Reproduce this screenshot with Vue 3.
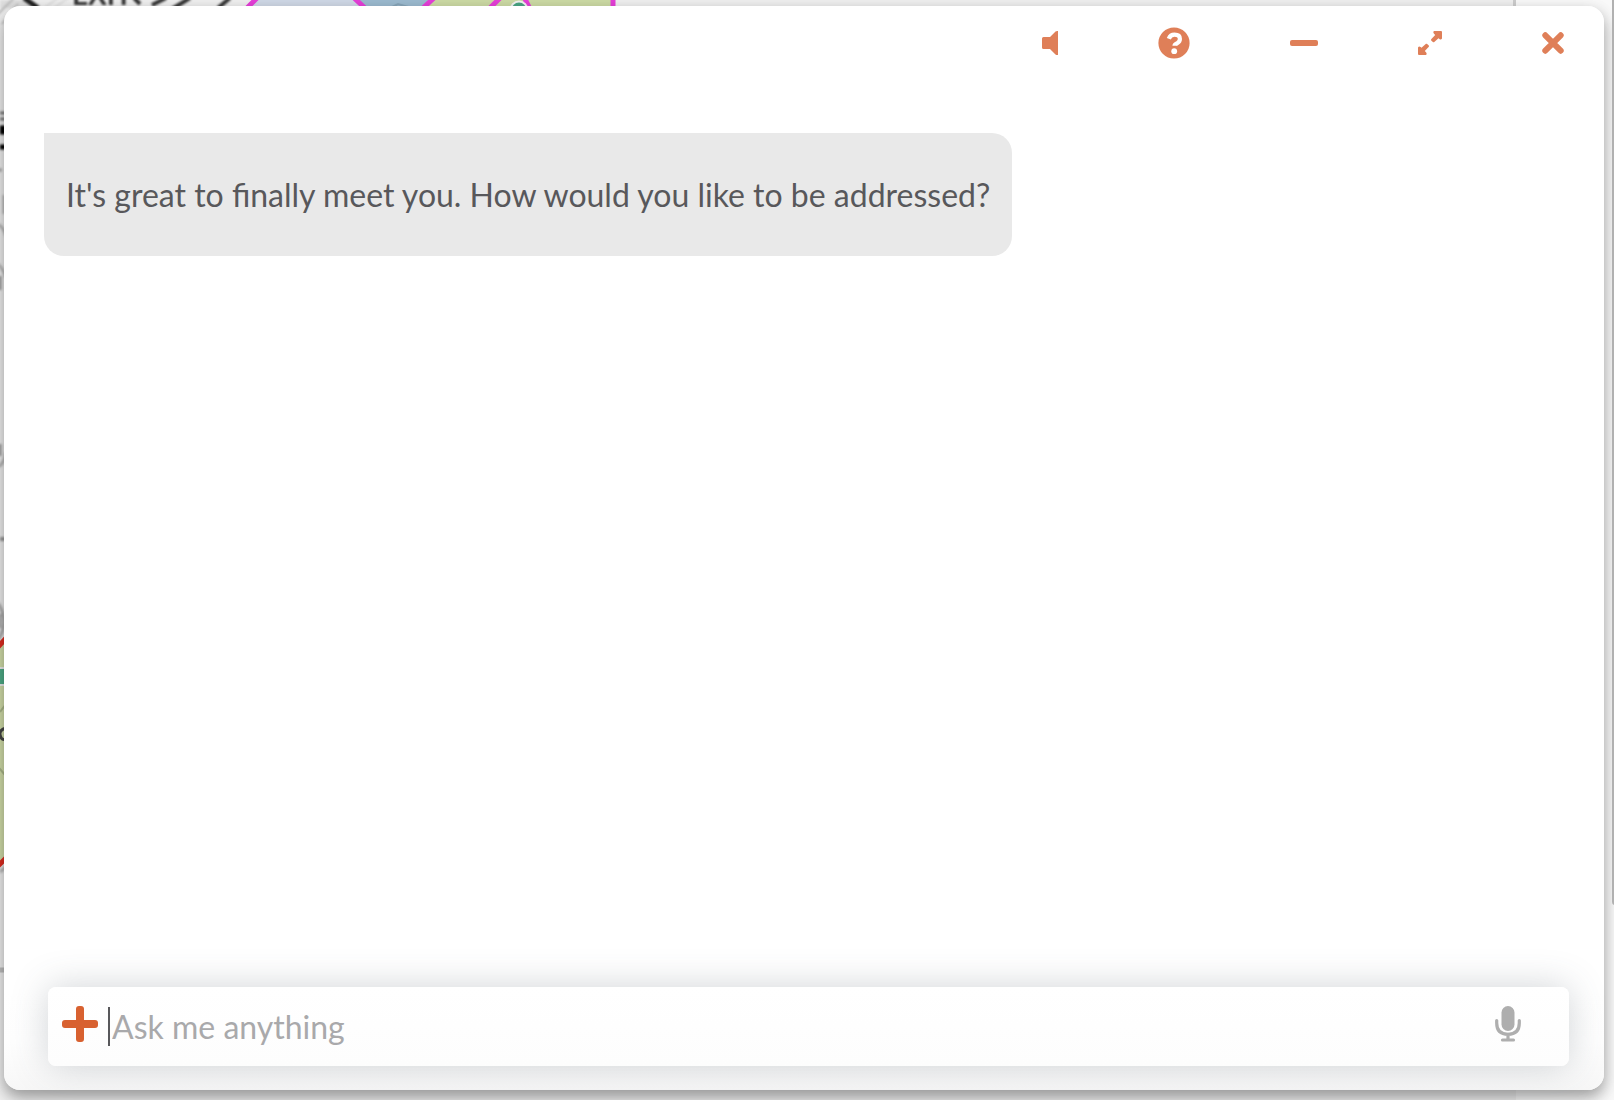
<script setup>
import { ref } from 'vue'

const messages = [
  { id: 1, text: "It's great to finally meet you. How would you like to be addressed?" },
]
const draft = ref('')
</script>

<template>
  <div class="page">
    <svg class="map" viewBox="0 0 1614 1100" preserveAspectRatio="xMinYMin slice" aria-hidden="true">
      <rect width="1614" height="1100" fill="#f0f0f0" />
      <rect x="1516" width="98" height="1100" fill="#f9f9f9" />
      <g class="soft">
        <path d="M0 0H24L44 8H0z" fill="#dcdcdc" />
        <path d="M-2 14L14 -2M2 24L18 4" stroke="#bbb" stroke-width="2" />
        <path d="M24 -2L38 8" stroke="#222" stroke-width="5" />
        <path d="M44 8L58 -2M54 8L68 -2" stroke="#ddd" stroke-width="2" />
        <path d="M134 -2L140 4M152 5L166 -2M172 9L190 -2M218 8L230 -2" stroke="#333" stroke-width="4" />
        <text x="72" y="5" class="label">EXIT</text>
      </g>
      <path d="M257 0H356L363 8H249z" fill="#d0d9e7" />
      <path d="M354 0H433L424 8H365z" fill="#9cbbd0" />
      <path d="M390 8L398 4L412 8" stroke="#88a6ba" stroke-width="2" fill="none" />
      <path d="M431 0H613V8H422z" fill="#cddba5" />
      <path d="M258 -3L246 9M352 -4L367 10M435 -3L422 9M502 -4L488 10M524 -3L530 9M613 0V8" stroke="#e63fd9" stroke-width="5" fill="none" />
      <circle cx="519" cy="10" r="8.500" fill="#4aa683" stroke="#f3f3f3" stroke-width="2" />
      <rect x="1513" width="3" height="8" fill="#cdcdcd" />

      <g class="soft" fill="none">
        <path d="M0 113H6M0 119H6" stroke="#777" stroke-width="3" />
        <path d="M0 130H6" stroke="#000" stroke-width="9" />
        <path d="M0 147H6" stroke="#000" stroke-width="5" />
        <circle cx="0" cy="170" r="2" fill="#aaa" />
        <path d="M4 195V214M-2 224Q4 228 6 236M-2 264Q4 270 6 278" stroke="#b8b8b8" stroke-width="3" />
        <path d="M0 276V290M0 444V456" stroke="#999" stroke-width="3" />
        <path d="M6 452Q5 463 -2 467" stroke="#b5b5b5" stroke-width="3" />
        <path d="M0 539H6" stroke="#999" stroke-width="4" />
        <path d="M-2 603Q10 622 -2 640M0 614V628" stroke="#a8a8a8" stroke-width="3" />
      </g>
      <path d="M0 645L8 636V856L0 866z" fill="#d2deaa" />
      <path d="M-2 647L8 636M-2 866L8 856" stroke="#e02c20" stroke-width="5" />
      <rect x="-8" y="668" width="16" height="17" fill="#4fae88" stroke="#eee" stroke-width="2" />
      <path d="M6 728Q-1 730 0 735Q2 742 6 738" stroke="#444" stroke-width="3" fill="none" />
      <path d="M0 712L6 704M-1 768L6 776" stroke="#acb98a" stroke-width="2" />
      <path d="M0 872L6 867" stroke="#b7b7b7" stroke-width="3" class="soft" />
      <path d="M0 970H6" stroke="#bebebe" stroke-width="5" />
    </svg>
    <div class="scroll-thumb"></div>

    <main class="chat">
      <header class="toolbar">
        <button type="button" aria-label="Mute">
          <svg width="16" height="24" viewBox="0 0 16 24"><path d="M1.500 6H8L13.500 .6Q14.300 0 15.200 0H16V24H15.200Q14.300 24 13.500 23.400L8 18H1.500Q0 18 0 16.500V7.500Q0 6 1.500 6z" /></svg>
        </button>
        <button type="button" aria-label="Help">
          <svg width="32" height="32" viewBox="0 0 32 32">
            <circle cx="16" cy="16" r="15.600" />
            <path d="M10.800 11.800Q12.300 7.700 16.500 7.700Q21.900 7.700 21.900 12Q21.900 14.600 19.200 16.200Q16.500 17.300 16.500 18.800" fill="none" stroke="#fff" stroke-width="4.200" />
            <circle cx="16.200" cy="24.200" r="2.900" fill="#fff" />
          </svg>
        </button>
        <button type="button" aria-label="Minimize">
          <svg width="28" height="6" viewBox="0 0 28 6"><rect width="28" height="6" rx="2" /></svg>
        </button>
        <button type="button" aria-label="Expand">
          <svg width="24" height="24" viewBox="0 0 24 24">
            <path d="M16 0H23Q24 0 24 1V7.500Q23 9.300 21.400 8L20.500 7.200L16 11.200Q15 11.600 14.300 10.600L13.200 9.500Q12.600 8.800 13.400 8L17.200 4L15.800 2.400Q14.600 .8 16 0z" />
            <path d="M8 24H1Q0 24 0 23V16.500Q1 14.700 2.600 16L3.500 16.800L8 12.800Q9 12.400 9.700 13.400L10.800 14.500Q11.400 15.200 10.600 16L6.800 20L8.200 21.600Q9.400 23.200 8 24z" />
          </svg>
        </button>
        <button type="button" aria-label="Close">
          <svg width="22" height="22" viewBox="0 0 22 22"><path d="M3.300 3.300L18.700 18.700M18.700 3.300L3.300 18.700" stroke="#df7f58" stroke-width="6" stroke-linecap="round" /></svg>
        </button>
      </header>

      <section class="messages" aria-live="polite">
        <p v-for="message in messages" :key="message.id" class="bubble">{{ message.text }}</p>
      </section>

      <form class="composer" @submit.prevent>
        <button type="button" class="add" aria-label="Add">
          <svg width="36" height="36" viewBox="0 0 36 36"><rect x="14" width="8" height="36" rx="3" /><rect y="14" width="36" height="8" rx="3" /></svg>
        </button>
        <span class="caret"></span>
        <input v-model="draft" type="text" placeholder="Ask me anything" aria-label="Message" />
        <button type="button" class="mic" aria-label="Voice input">
          <svg width="26" height="36" viewBox="0 0 26 36">
            <rect x="6.500" width="13" height="25" rx="6.500" />
            <path d="M1.700 14.500V17Q1.700 28.300 13 28.300T24.300 17V14.500M13 28V33M7.500 34H18.500" fill="none" stroke="#aeaeae" stroke-width="3.200" stroke-linecap="round" />
          </svg>
        </button>
      </form>
    </main>
  </div>
</template>

<style>
body {
  margin: 0;
}
</style>

<style scoped>
.page {
  position: relative;
  display: flex;
  box-sizing: border-box;
  min-height: 100vh;
  padding: 6px 10px 10px 4px;
  overflow: hidden;
  background: #f0f0f0;
  font-family: Lato, sans-serif;
  font-size: 32px;
  text-rendering: optimizeLegibility;
}
.map {
  position: absolute;
  inset: 0;
  width: 100%;
  height: 100%;
}
.soft {
  filter: blur(1px);
}
.label {
  fill: #333;
  font-size: 28px;
  font-weight: 700;
}
.scroll-thumb {
  position: absolute;
  z-index: 2;
  top: -8px;
  right: -4px;
  width: 6px;
  height: 83%;
  border-radius: 4px;
  background: #b1b1b1;
}
.chat {
  position: relative;
  display: flex;
  flex: 1;
  flex-direction: column;
  min-width: 0;
  border-radius: 16px;
  background: linear-gradient(to top, #f7f7f7, #fefefe 48px, #fff 100px);
  box-shadow: 0 8px 16px rgba(0, 0, 0, 0.3), 0 4px 16px rgba(0, 0, 0, 0.1);
}
button {
  display: flex;
  flex: none;
  padding: 0;
  border: 0;
  background: none;
  cursor: pointer;
}
.toolbar {
  display: flex;
  align-items: center;
  justify-content: flex-end;
  gap: 100px;
  height: 74px;
  padding: 0 40px;
  fill: #df7f58;
}
.messages {
  display: flex;
  flex: 1;
  flex-direction: column;
  align-items: flex-start;
  padding: 53px 40px;
}
.bubble {
  margin: 0;
  padding: 42px 22px;
  border-radius: 0 20px 20px 20px;
  background: #e9e9e9;
  color: #58585b;
  line-height: 39px;
}
.composer {
  display: flex;
  align-items: center;
  height: 79px;
  margin: 0 35px 24px 44px;
  padding: 0 48px 0 14px;
  box-sizing: border-box;
  border-radius: 8px;
  background: linear-gradient(#fff, #fdfdfd);
  box-shadow: 0 0 36px rgba(70, 85, 95, 0.25);
}
.add,
.mic {
  padding-bottom: 6px;
}
.add {
  fill: #d86130;
}
.mic {
  fill: #aeaeae;
}
.caret {
  flex: none;
  width: 2px;
  height: 39px;
  margin-left: 10px;
  background: #58585b;
}
input {
  flex: 1;
  min-width: 0;
  height: 39px;
  padding: 0 0 0 2px;
  border: 0;
  outline: 0;
  background: none;
  color: #58585b;
  font: inherit;
  text-rendering: inherit;
}
input::placeholder {
  color: #a9a9ab;
  opacity: 1;
}
</style>
